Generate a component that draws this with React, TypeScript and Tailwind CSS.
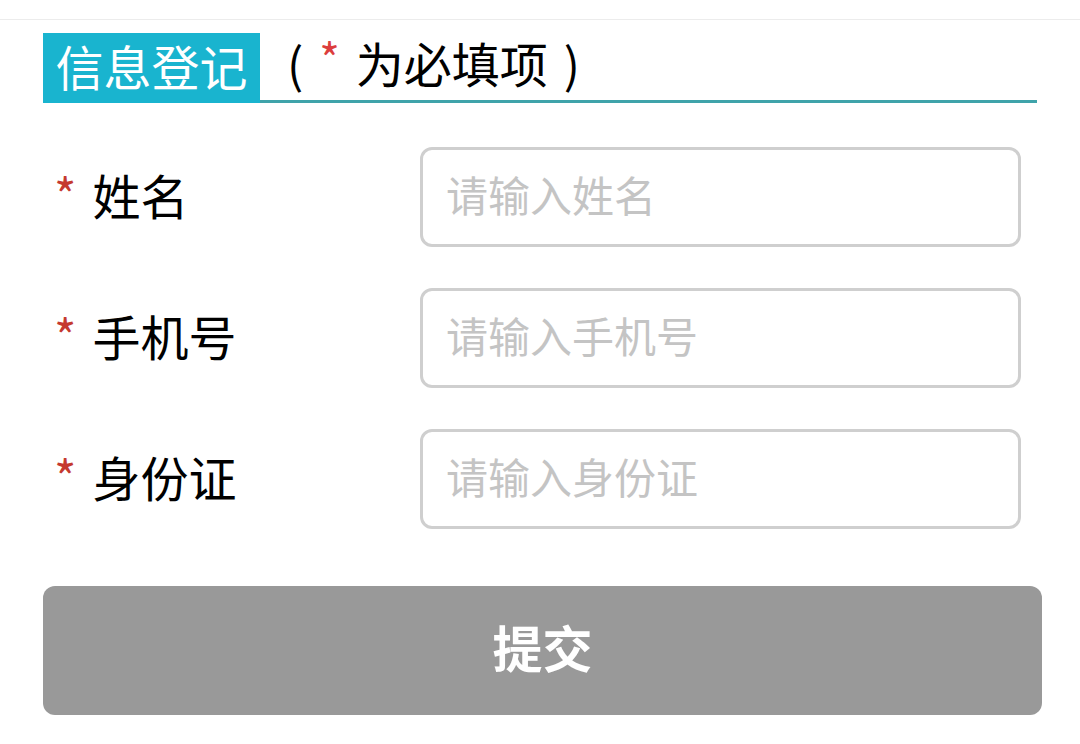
const fields = [
  { label: '姓名', placeholder: '请输入姓名' },
  { label: '手机号', placeholder: '请输入手机号' },
  { label: '身份证', placeholder: '请输入身份证' },
];

export default function App() {
  return (
    <div
      className="w-[1080px] h-[744px] bg-white overflow-hidden"
      style={{ fontFamily: '"Noto Sans CJK SC", "Noto Sans", sans-serif' }}
    >
      <div className="h-[20px] border-b border-[#ececec]" />

      <div className="pl-[43px] pt-[13px]">
        {/* header */}
        <div className="flex">
          <div className="w-[217px] h-[70px] bg-[#19b4cf] flex items-center justify-center pb-[6px] text-white text-[48px] leading-none">
            信息登记
          </div>
          <div className="w-[777px] h-[70px] border-b-[3px] border-[#3fa3aa] flex items-center pl-[27px] pb-[9px] text-[48px] leading-none text-black">
            <span>(</span>
            <span className="text-[#dc3d3d] text-[44px] ml-[16px] mt-[-10px]">*</span>
            <span className="ml-[16px]">为必填项</span>
            <span className="ml-[16px]">)</span>
          </div>
        </div>

        {/* form rows */}
        <div className="mt-[44px] flex flex-col gap-[41px]">
          {fields.map((f) => (
            <div key={f.label} className="flex items-center h-[100px]">
              <div className="w-[377px] flex items-center pl-[11px] pb-[6px]">
                <span className="text-[#c5392f] text-[48px] leading-none mt-[-2px] mr-[16px]">*</span>
                <span className="text-[48px] leading-none text-black">{f.label}</span>
              </div>
              <div className="w-[601px] h-[100px] rounded-[12px] border-[3px] border-[#cfcfcf] flex items-center pl-[23px] pb-[6px]">
                <span className="text-[42px] leading-none text-[#c4c4c4]">{f.placeholder}</span>
              </div>
            </div>
          ))}
        </div>

        {/* submit */}
        <button className="mt-[57px] w-[999px] h-[129px] rounded-[12px] bg-[#999999] text-white text-[50px] font-bold flex items-center justify-center pb-[8px]">
          提交
        </button>
      </div>
    </div>
  );
}
